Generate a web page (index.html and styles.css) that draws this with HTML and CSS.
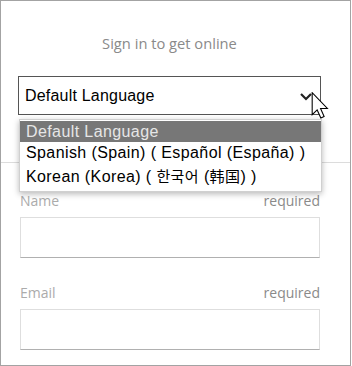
FILE: index.html
```html
<!DOCTYPE html>
<html lang="en">
<head>
  <meta charset="UTF-8" />
  <title>Sign in</title>
  <link rel="stylesheet" href="styles.css">
</head>
<body>
  <div class="frame">
    <div class="title">Sign in to get online</div>

    <div class="lang-select">
      <span>Default Language</span>
      <svg class="chevron" width="12" height="8" viewBox="0 0 12 8">
        <path d="M1 1 L6 6 L11 1" fill="none" stroke="#222" stroke-width="2.2"/>
      </svg>
    </div>

    <hr class="divider">

    <div class="fields">
      <div class="field">
        <div class="field-head"><span class="label">Name</span><span class="req">required</span></div>
        <div class="input"></div>
      </div>
      <div class="field">
        <div class="field-head"><span class="label">Email</span><span class="req">required</span></div>
        <div class="input"></div>
      </div>
    </div>

    <!-- open dropdown of the language select -->
    <ul class="lang-menu">
      <li class="selected">Default Language</li>
      <li>Spanish (Spain) ( Español (España) )</li>
      <li class="cjk">Korean (Korea) ( <span class="cjk-text">한국어</span> (<span class="cjk-text">韩国</span>) )</li>
    </ul>

    <svg class="cursor" width="18" height="27" viewBox="0 0 12 19">
      <path d="M0.5 0.5 L0.5 16 L4 12.6 L6.6 18.3 L8.9 17.3 L6.4 11.6 L11.2 11.6 Z" fill="#fff" stroke="#000" stroke-width="0.75" stroke-linejoin="miter"/>
    </svg>
  </div>
</body>
</html>
```

FILE: styles.css
```css
body {
  margin: 0;
  background: #fff;
  font-family: "Open Sans", "Noto Sans", sans-serif;
}
.frame {
  position: relative;
  width: 351px;
  height: 366px;
  box-sizing: border-box;
  border: 1px solid #a3a3a3;
  background: #fff;
  overflow: hidden;
}
.title {
  margin-top: 32px;
  margin-left: 17px;
  width: 303px;
  text-align: center;
  font-size: 14.7px;
  line-height: 20px;
  color: #8a8a8a;
}
.lang-select {
  margin: 23px 0 0 17px;
  width: 303px;
  height: 39px;
  box-sizing: border-box;
  border: 1px solid #555;
  display: flex;
  align-items: center;
  justify-content: space-between;
  padding: 0 8px 0 6px;
  font-family: "Liberation Sans", Arial, sans-serif;
  font-size: 16px;
  letter-spacing: 0.2px;
  color: #000;
}
.chevron {
  margin-top: 2px;
}
.divider {
  margin: 47px 0 0;
  border: 0;
  border-top: 1px solid #dcdcdc;
  height: 0;
}
.fields {
  margin: 28px 0 0 19px;
  width: 300px;
  display: flex;
  flex-direction: column;
  gap: 25px;
}
.field-head {
  display: flex;
  justify-content: space-between;
  font-size: 14px;
  line-height: 20px;
  margin-bottom: 6px;
}
.label {
  color: #ababab;
}
.req {
  color: #8a8a8a;
}
.input {
  height: 41px;
  box-sizing: border-box;
  border: 1px solid #dedede;
  border-bottom-color: #b0b0b0;
}

/* dropdown overlay */
.lang-menu {
  position: absolute;
  top: 118px;
  left: 18px;
  width: 303px;
  box-sizing: border-box;
  margin: 0;
  padding: 1px 0 2px;
  list-style: none;
  background: #fff;
  border: 1px solid #d0d0d0;
  box-shadow: 0 2px 6px rgba(0, 0, 0, 0.28);
  font-family: "Liberation Sans", Arial, "Noto Sans CJK KR", sans-serif;
  font-size: 16px;
  letter-spacing: 0.4px;
  color: #000;
}
.lang-menu li {
  padding: 0 6px;
  line-height: 22px;
  white-space: nowrap;
}
.lang-menu li.selected {
  background: #777;
  color: #e6e6e6;
  line-height: 21px;
}
.lang-menu li.cjk {
  line-height: 25px;
}
.cjk-text {
  font-size: 15px;
}
.cursor {
  position: absolute;
  top: 91px;
  left: 310px;
}
```
